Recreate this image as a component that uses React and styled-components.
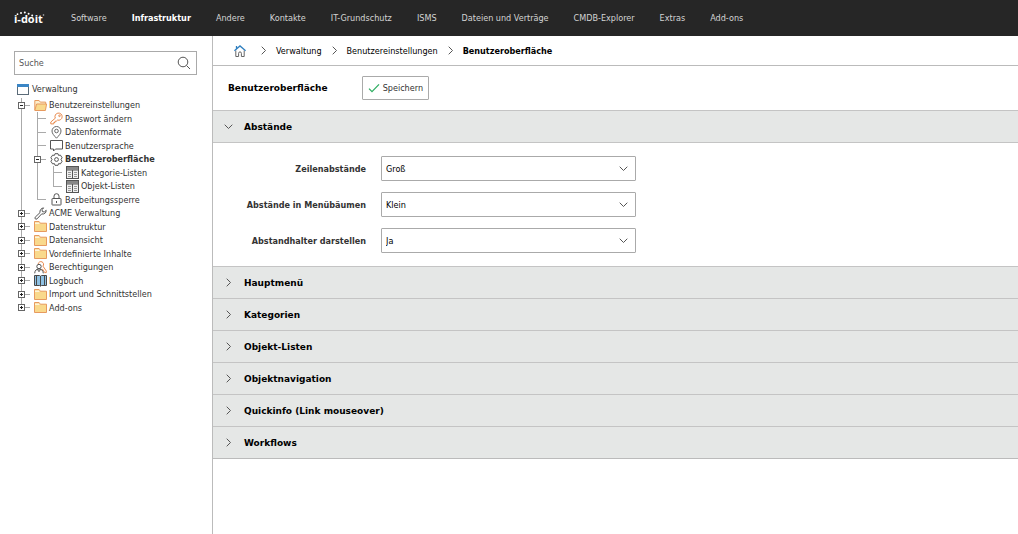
import React, { useState } from "react";
import styled, { createGlobalStyle } from "styled-components";

const App = () => {
  const [open, setOpen] = useState("Abstände");

  return (
    <Page>
      <GlobalStyle />
      <TopBar>
        <Logo href="#home">
          i-doit
          <LogoDots viewBox="0 0 34 8" aria-hidden="true">
            <circle cx="3.5" cy="3.2" r="0.9" />
            <circle cx="7" cy="1.9" r="1" />
            <circle cx="10.8" cy="1.5" r="1" />
            <circle cx="14.6" cy="2.7" r="1" />
            <circle cx="18.2" cy="4.4" r="1" />
            <circle cx="29.5" cy="4" r="0.8" opacity="0.7" />
          </LogoDots>
        </Logo>
        <Menu>
          {menu.map((item) => (
            <MenuLink key={item} href="#menu" $active={item === "Infrastruktur"}>
              {item}
            </MenuLink>
          ))}
        </Menu>
      </TopBar>
      <Body>
        <Sidebar>
          <Search>
            <SearchInput type="search" placeholder="Suche" aria-label="Suche" />
            <SearchIcon viewBox="0 0 14 14" aria-hidden="true">
              <circle cx="6" cy="6" r="4.8" />
              <path d="M9.5 9.5 13 13" />
            </SearchIcon>
          </Search>
          <Tree>
            <TreeRoot>
              <Icon name="window" />
              <TreeLink href="#tree">Verwaltung</TreeLink>
            </TreeRoot>
            {tree.map((node) => (
              <TreeRow key={node.label}>
                {node.guides.split("").map((kind, i) => (
                  <TreeGuide key={i} kind={kind} label={node.label} />
                ))}
                <Icon name={node.icon} />
                <TreeLink href="#tree" $active={node.active}>
                  {node.label}
                </TreeLink>
              </TreeRow>
            ))}
          </Tree>
        </Sidebar>
        <Main>
          <Breadcrumb>
            <HomeLink href="#home" aria-label="Start">
              <HomeIcon viewBox="0 0 12 12" aria-hidden="true">
                <path d="M1.8 5.5v6h2.8V8.300a1.400 1.400 0 0 1 2.800 0v3.200h2.800v-6" stroke="#666" />
                <path d="M.4 5.700 6 .9l5.600 4.800M2.500 3.600V1" stroke="#2f7fbf" strokeWidth="1.300" />
              </HomeIcon>
            </HomeLink>
            <Chevron />
            <CrumbLink href="#crumb">Verwaltung</CrumbLink>
            <Chevron />
            <CrumbLink href="#crumb">Benutzereinstellungen</CrumbLink>
            <Chevron />
            <CrumbLink href="#crumb" $active>
              Benutzeroberfläche
            </CrumbLink>
          </Breadcrumb>
          <TitleBar>
            <Title>Benutzeroberfläche</Title>
            <SaveButton type="button">
              <CheckIcon viewBox="0 0 12 10" aria-hidden="true">
                <path d="M1 5.600 4 8.600 11 1.400" />
              </CheckIcon>
              Speichern
            </SaveButton>
          </TitleBar>
          <Sections>
            {sections.map((name) => (
              <section key={name}>
                <SectionTitle>
                  <SectionButton
                    type="button"
                    aria-expanded={open === name}
                    onClick={() => setOpen(open === name ? "" : name)}
                  >
                    <Chevron down={open === name} />
                    {name}
                  </SectionButton>
                </SectionTitle>
                {name === "Abstände" && open === name && (
                  <Form>
                    {fields.map((field) => (
                      <Field key={field.id}>
                        <Label htmlFor={field.id}>{field.label}</Label>
                        <SelectWrapper>
                          <Select id={field.id} defaultValue={field.value}>
                            {field.options.map((option) => (
                              <option key={option}>{option}</option>
                            ))}
                          </Select>
                          <SelectArrow viewBox="0 0 9 9" aria-hidden="true">
                            <path d="M.7 2.7 4.5 6.5 8.3 2.7" />
                          </SelectArrow>
                        </SelectWrapper>
                      </Field>
                    ))}
                  </Form>
                )}
              </section>
            ))}
          </Sections>
        </Main>
      </Body>
    </Page>
  );
};

const TreeGuide = ({ kind, label }) => {
  const toggle = kind === "+" || kind === "-" || kind === "x";
  return (
    <Guide $kind={kind}>
      {toggle && (
        <Toggle type="button" aria-label={label} aria-expanded={kind === "-"}>
          <svg viewBox="0 0 7 7" width="7" height="7">
            <rect x="0.5" y="0.5" width="6" height="6" fill="#fff" stroke="#666" />
            <path d={kind === "-" ? "M2 3.5h3" : "M2 3.5h3M3.5 2v3"} stroke="#222" />
          </svg>
        </Toggle>
      )}
    </Guide>
  );
};

const Chevron = ({ down }) => (
  <ChevronIcon viewBox="0 0 9 9" aria-hidden="true">
    <path d={down ? "M.7 2.7 4.5 6.5 8.3 2.7" : "M2.7.7 6.5 4.5 2.7 8.3"} />
  </ChevronIcon>
);

const icons = {
  window: (
    <>
      <rect x="0.5" y="1.5" width="11" height="10" fill="#fff" stroke="#5b6b78" />
      <path d="M0 1h12v3H0z" fill="#3b86c6" />
    </>
  ),
  folder: (
    <>
      <path d="M.5 11.5v-10h4.6l1.2 1.7h6.2v8.3z" fill="#f9d98c" stroke="#e79a5f" />
      <path d="M1 3.2h4.4" stroke="#fff" />
    </>
  ),
  folderOpen: (
    <>
      <path d="M.8 11V1.5h4.3l1.2 1.6h5.4V5" fill="#fdeecb" stroke="#e79a5f" />
      <path d="M.8 11.5 2.6 5h10l-1.2 6.5z" fill="#f9d98c" stroke="#e79a5f" />
    </>
  ),
  key: (
    <g fill="none" stroke="#e98a4e">
      <path d="M5.3 6.2a3.6 3.6 0 1 1 2.2 1.9L6.3 9.2H5v1.3H3.8v1.4H.8V10z" />
      <circle cx="9.5" cy="3.8" r="0.8" />
    </g>
  ),
  pin: (
    <g fill="none" stroke="#666">
      <path d="M6.5 12.2C4 9.5 2 7.5 2 5a4.5 4.5 0 0 1 9 0c0 2.5-2 4.500-4.500 7.200z" />
      <circle cx="6.5" cy="5" r="1.8" />
    </g>
  ),
  speech: <path d="M.5 1.5h12V10h-7l-2 2v-2h-3z" fill="none" stroke="#555" />,
  gear: (
    <g fill="none" stroke="#555">
      <path d="M5 .7h3l.6 1.7 1.8-.3 1.7 2.600L11 6.500l1.100 1.800-1.700 2.600-1.800-.3-.6 1.700H5l-.6-1.700-1.800.3L.9 8.300 2 6.500.9 4.700l1.700-2.600 1.800.3z" />
      <circle cx="6.5" cy="6.5" r="1.9" />
    </g>
  ),
  table: (
    <>
      <rect x="0.5" y="0.5" width="12" height="12" fill="#f0f0f0" stroke="#555" />
      <path d="M1 1h11v2.500H1z" fill="#888" />
      <path d="M1 4h11M6.5 4v8" stroke="#555" />
      <path d="M2 6.500h3M8 6.500h3M2 8.500h3M8 8.500h3M2 10.500h3M8 10.500h3" stroke="#999" />
    </>
  ),
  lock: (
    <g fill="none" stroke="#555">
      <rect x="2" y="5.5" width="9" height="6.5" rx="0.5" />
      <path d="M4 5.5V3.200a2.500 2.500 0 0 1 5 0v2.300M6.500 8v2" />
    </g>
  ),
  wrench: (
    <path
      d="M1.2 10.2 6 5.6C5.500 3.500 7 1 9.600.9L8 2.700l.4 1.900 1.900.4 1.900-1.700c.2 2.700-2.300 4.300-4.500 3.600L3 11.900c-1.200 1-2.800-.6-1.800-1.700z"
      fill="none"
      stroke="#555"
    />
  ),
  rights: (
    <g fill="none">
      <path d="M4.200 2.900a2.700 2.700 0 1 1 4.700 2.200l3.400 4.900v1.600h-1.600L8.300 7.800" stroke="#e98a4e" />
      <circle cx="5" cy="5.5" r="2.200" stroke="#555" />
      <path d="M.7 12.300c.2-3 1.700-4.300 4.300-4.300s4.100 1.300 4.300 4.300M3.300 8.200 5 10.700l1.700-2.500" stroke="#555" />
    </g>
  ),
  book: (
    <>
      <path d="M.5 1.500h5l1 .7 1-.7h5v10h-5l-1 .7-1-.7h-5z" fill="#8fc1e3" stroke="#4a4a4a" />
      <path d="M2.500 2v9M6.500 2v10M10.500 2v9" stroke="#4a4a4a" />
    </>
  ),
};

const Icon = ({ name }) => (
  <TreeIcon viewBox="0 0 13 13" aria-hidden="true">
    {icons[name]}
  </TreeIcon>
);

const menu = [
  "Software",
  "Infrastruktur",
  "Andere",
  "Kontakte",
  "IT-Grundschutz",
  "ISMS",
  "Dateien und Verträge",
  "CMDB-Explorer",
  "Extras",
  "Add-ons",
];

// guides: "|" line, "t" branch, "l" last branch, "+" closed, "-" open, "x" closed and last
const tree = [
  { label: "Benutzereinstellungen", icon: "folderOpen", guides: "-" },
  { label: "Passwort ändern", icon: "key", guides: "|t" },
  { label: "Datenformate", icon: "pin", guides: "|t" },
  { label: "Benutzersprache", icon: "speech", guides: "|t" },
  { label: "Benutzeroberfläche", icon: "gear", guides: "|-", active: true },
  { label: "Kategorie-Listen", icon: "table", guides: "||t" },
  { label: "Objekt-Listen", icon: "table", guides: "||l" },
  { label: "Berbeitungssperre", icon: "lock", guides: "|l" },
  { label: "ACME Verwaltung", icon: "wrench", guides: "+" },
  { label: "Datenstruktur", icon: "folder", guides: "+" },
  { label: "Datenansicht", icon: "folder", guides: "+" },
  { label: "Vordefinierte Inhalte", icon: "folder", guides: "+" },
  { label: "Berechtigungen", icon: "rights", guides: "+" },
  { label: "Logbuch", icon: "book", guides: "+" },
  { label: "Import und Schnittstellen", icon: "folder", guides: "+" },
  { label: "Add-ons", icon: "folder", guides: "x" },
];

const sections = [
  "Abstände",
  "Hauptmenü",
  "Kategorien",
  "Objekt-Listen",
  "Objektnavigation",
  "Quickinfo (Link mouseover)",
  "Workflows",
];

const fields = [
  { id: "rows", label: "Zeilenabstände", value: "Groß", options: ["Klein", "Groß"] },
  { id: "menu", label: "Abstände in Menübäumen", value: "Klein", options: ["Klein", "Groß"] },
  { id: "spacer", label: "Abstandhalter darstellen", value: "Ja", options: ["Ja", "Nein"] },
];

const GlobalStyle = createGlobalStyle`
  * {
    box-sizing: border-box;
  }
  body {
    margin: 0;
    background: #fff;
    color: #000;
  }
  body, button, input, select {
    font-family: "DejaVu Sans Condensed", "DejaVu Sans", sans-serif;
    font-size: 9px;
  }
  a {
    color: inherit;
    text-decoration: none;
  }
`;

const Page = styled.div`
  min-height: 100vh;
  display: flex;
  flex-direction: column;
`;

const TopBar = styled.header`
  height: 36px;
  display: flex;
  align-items: center;
  background: #262626;
`;

const Logo = styled.a`
  position: relative;
  flex: 0 0 57px;
  margin-left: 14px;
  font-family: "Open Sans", sans-serif;
  font-size: 11px;
  font-weight: 700;
  color: #fff;
`;

const LogoDots = styled.svg`
  position: absolute;
  left: 0;
  top: 0;
  width: 34px;
  height: 8px;
  fill: #fff;
`;

const Menu = styled.nav`
  display: flex;
  gap: 25px;
`;

const MenuLink = styled.a`
  white-space: nowrap;
  font-weight: ${(p) => (p.$active ? 700 : 400)};
  color: ${(p) => (p.$active ? "#fff" : "#d4d4d4")};
`;

const Body = styled.div`
  flex: 1;
  display: flex;
`;

const Sidebar = styled.aside`
  flex: 0 0 213px;
  padding: 15px 15px 15px 14px;
  border-right: 1px solid #bbb;
`;

const Search = styled.div`
  position: relative;
`;

const SearchInput = styled.input`
  display: block;
  width: 100%;
  height: 24px;
  padding: 0 24px 0 4px;
  border: 1px solid #aaa;
  border-radius: 0;
  appearance: none;
  outline: none;
  &::placeholder {
    color: #555;
  }
`;

const SearchIcon = styled.svg`
  position: absolute;
  right: 6px;
  top: 5px;
  width: 14px;
  height: 14px;
  fill: none;
  stroke: #555;
`;

const Tree = styled.ul`
  margin: 5px 0 0;
  padding: 0 0 0 3px;
  list-style: none;
`;

const TreeRow = styled.li`
  display: flex;
  align-items: center;
  height: 13px;
  &:nth-child(even) {
    height: 14px;
  }
`;

const TreeRoot = styled.li`
  display: flex;
  align-items: center;
  height: 18px;
  svg {
    margin: 0 2px 0 0;
  }
`;

const TreeLink = styled.a`
  white-space: nowrap;
  color: #333;
  font-weight: ${(p) => (p.$active ? 700 : 400)};
`;

const TreeIcon = styled.svg`
  flex: none;
  width: 13px;
  height: 13px;
  margin: 0 2px 0 1px;
`;

const Guide = styled.span`
  align-self: stretch;
  width: 16px;
  padding-left: 1px;
  display: flex;
  align-items: center;
  background-image: linear-gradient(#aaa, #aaa), linear-gradient(#aaa, #aaa);
  background-repeat: no-repeat;
  background-position: 4px 0, 4px 50%;
  background-size: 1px ${(p) => (p.$kind === "l" || p.$kind === "x" ? "50%" : "100%")},
    ${(p) => (p.$kind === "|" ? "0" : "9px")} 1px;
`;

const Toggle = styled.button`
  display: flex;
  padding: 0;
  border: 0;
  background: none;
`;

const Main = styled.main`
  flex: 1;
  min-width: 0;
`;

const Breadcrumb = styled.nav`
  height: 30px;
  padding-left: 21px;
  display: flex;
  align-items: center;
  gap: 8px;
  border-bottom: 1px solid #bbb;
`;

const HomeLink = styled.a`
  display: flex;
  padding-right: 5px;
`;

const HomeIcon = styled.svg`
  width: 12px;
  height: 12px;
  fill: none;
`;

const CrumbLink = styled.a`
  font-weight: ${(p) => (p.$active ? 700 : 400)};
`;

const ChevronIcon = styled.svg`
  flex: none;
  width: 9px;
  height: 9px;
  fill: none;
  stroke: #555;
`;

const TitleBar = styled.div`
  height: 44px;
  padding-left: 15px;
  display: flex;
  align-items: center;
  gap: 34px;
`;

const headingFont = `
  font-family: "DejaVu Sans", sans-serif;
  font-size: 9px;
  font-weight: 700;
`;

const Title = styled.h1`
  margin: 0;
  ${headingFont}
`;

const SaveButton = styled.button`
  height: 24px;
  padding: 0 5px;
  display: flex;
  align-items: center;
  gap: 3px;
  border: 1px solid #aaa;
  border-radius: 1px;
  background: #fff;
  color: #333;
`;

const CheckIcon = styled.svg`
  width: 12px;
  height: 10px;
  fill: none;
  stroke: #2fae62;
  stroke-width: 1.3;
`;

const Sections = styled.div`
  border-bottom: 1px solid #bbb;
`;

const SectionTitle = styled.h2`
  margin: 0;
`;

const SectionButton = styled.button`
  width: 100%;
  height: 32px;
  padding: 0 11px;
  display: flex;
  align-items: center;
  gap: 11px;
  border: 0;
  border-top: 1px solid #c4c4c4;
  background: #e5e7e6;
  color: #000;
  ${headingFont}
`;

const Form = styled.div`
  padding: 13px 0;
  display: grid;
  gap: 11px;
  border-top: 1px solid #c4c4c4;
`;

const Field = styled.div`
  display: grid;
  grid-template-columns: 153px minmax(0, 255px);
  align-items: center;
  gap: 15px;
`;

const Label = styled.label`
  text-align: right;
  font-weight: 700;
  color: #333;
`;

const SelectWrapper = styled.div`
  position: relative;
`;

const Select = styled.select`
  display: block;
  width: 100%;
  height: 25px;
  padding: 0 24px 0 4px;
  border: 1px solid #aaa;
  border-radius: 1px;
  background: #fff;
  color: #000;
  appearance: none;
`;

const SelectArrow = styled.svg`
  position: absolute;
  right: 8px;
  top: 8px;
  width: 9px;
  height: 9px;
  fill: none;
  stroke: #555;
  pointer-events: none;
`;

export default App;
